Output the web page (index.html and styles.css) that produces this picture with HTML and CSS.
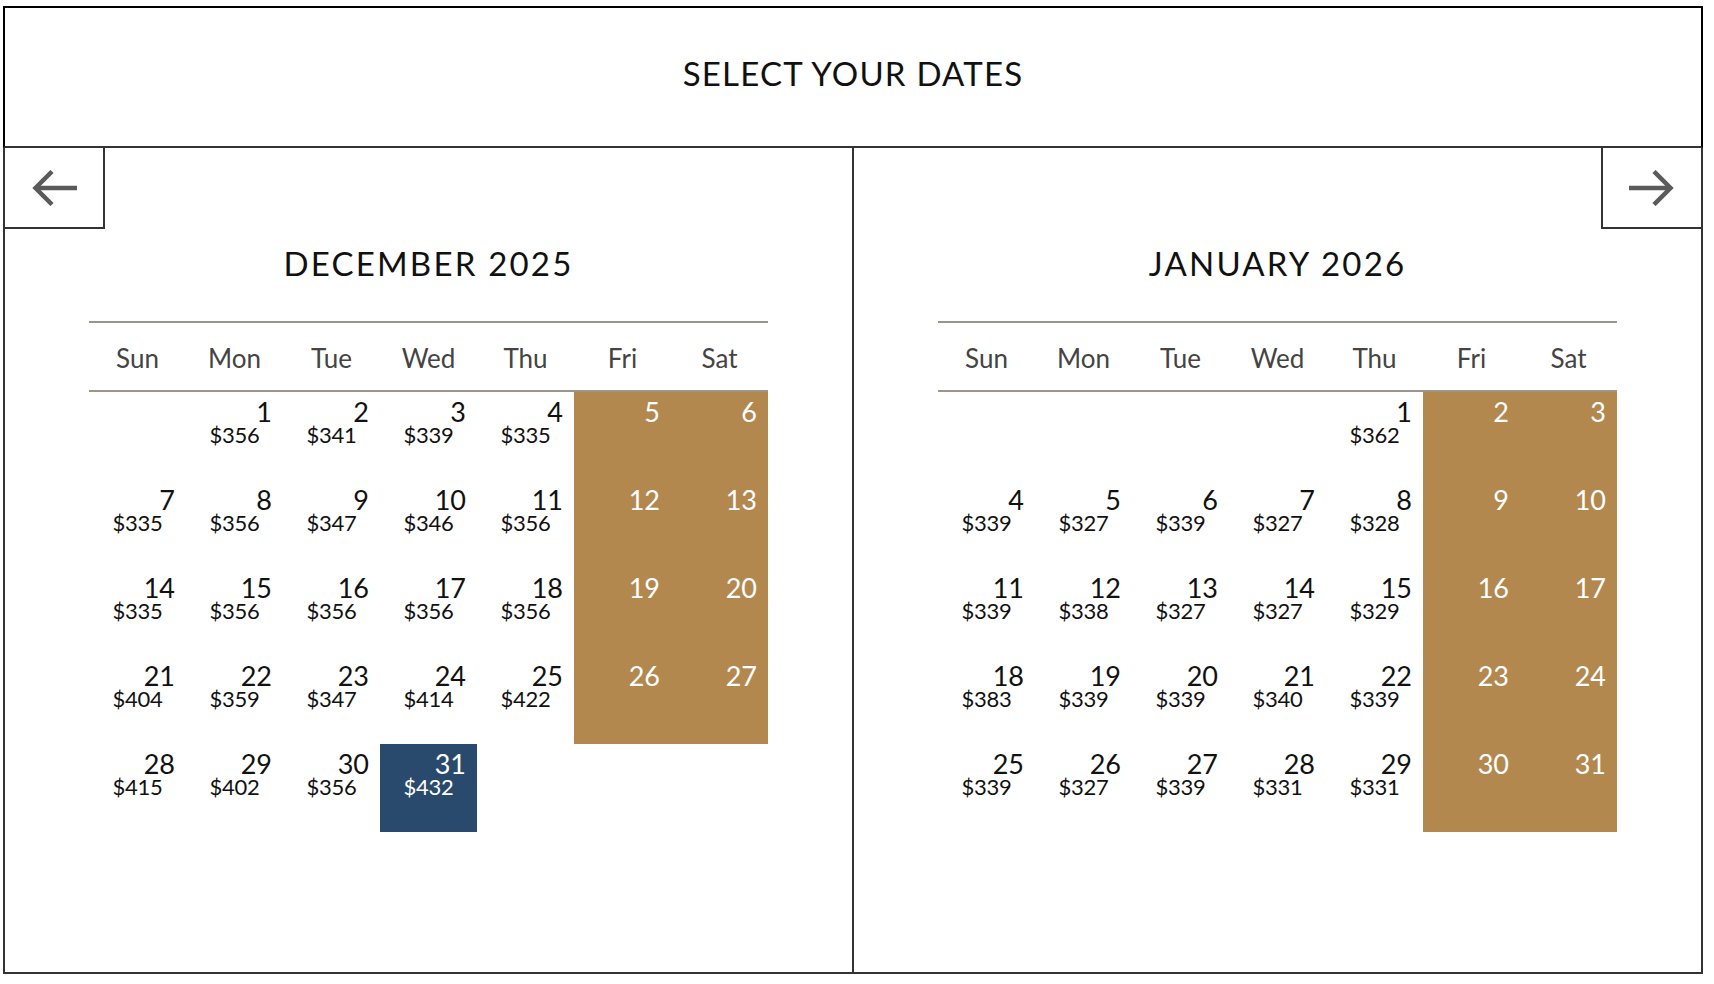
FILE: index.html
```html
<!DOCTYPE html>
<html lang="en">
<head>
<meta charset="utf-8">
<title>Select your dates</title>
<link rel="stylesheet" href="styles.css">
</head>
<body>
<div class="frame">
  <header class="header">
    <h1 class="header-title">SELECT YOUR DATES</h1>
  </header>
  <div class="months">
    <section class="panel panel-left">
      <button class="nav nav-prev" aria-label="Previous month">
        <svg width="46" height="36" viewBox="0 0 46 36"><path d="M46 18H5" /><polyline points="21,1.5 4.5,18 21,34.5" /></svg>
      </button>
      <h2 class="month-title">DECEMBER 2025</h2>
      <div class="cal">
        <div class="weekdays">
          <span>Sun</span><span>Mon</span><span>Tue</span><span>Wed</span><span>Thu</span><span>Fri</span><span>Sat</span>
        </div>
        <div class="days">
          <div class="cell"></div>
          <div class="cell"><div class="num">1</div><div class="price">$356</div></div>
          <div class="cell"><div class="num">2</div><div class="price">$341</div></div>
          <div class="cell"><div class="num">3</div><div class="price">$339</div></div>
          <div class="cell"><div class="num">4</div><div class="price">$335</div></div>
          <div class="cell wknd"><div class="num">5</div></div>
          <div class="cell wknd"><div class="num">6</div></div>

          <div class="cell"><div class="num">7</div><div class="price">$335</div></div>
          <div class="cell"><div class="num">8</div><div class="price">$356</div></div>
          <div class="cell"><div class="num">9</div><div class="price">$347</div></div>
          <div class="cell"><div class="num">10</div><div class="price">$346</div></div>
          <div class="cell"><div class="num">11</div><div class="price">$356</div></div>
          <div class="cell wknd"><div class="num">12</div></div>
          <div class="cell wknd"><div class="num">13</div></div>

          <div class="cell"><div class="num">14</div><div class="price">$335</div></div>
          <div class="cell"><div class="num">15</div><div class="price">$356</div></div>
          <div class="cell"><div class="num">16</div><div class="price">$356</div></div>
          <div class="cell"><div class="num">17</div><div class="price">$356</div></div>
          <div class="cell"><div class="num">18</div><div class="price">$356</div></div>
          <div class="cell wknd"><div class="num">19</div></div>
          <div class="cell wknd"><div class="num">20</div></div>

          <div class="cell"><div class="num">21</div><div class="price">$404</div></div>
          <div class="cell"><div class="num">22</div><div class="price">$359</div></div>
          <div class="cell"><div class="num">23</div><div class="price">$347</div></div>
          <div class="cell"><div class="num">24</div><div class="price">$414</div></div>
          <div class="cell"><div class="num">25</div><div class="price">$422</div></div>
          <div class="cell wknd"><div class="num">26</div></div>
          <div class="cell wknd"><div class="num">27</div></div>

          <div class="cell"><div class="num">28</div><div class="price">$415</div></div>
          <div class="cell"><div class="num">29</div><div class="price">$402</div></div>
          <div class="cell"><div class="num">30</div><div class="price">$356</div></div>
          <div class="cell selected"><div class="num">31</div><div class="price">$432</div></div>
          <div class="cell"></div>
          <div class="cell"></div>
          <div class="cell"></div>
        </div>
      </div>
    </section>
    <section class="panel panel-right">
      <button class="nav nav-next" aria-label="Next month">
        <svg width="46" height="36" viewBox="0 0 46 36"><path d="M0 18H41" /><polyline points="25,1.5 41.5,18 25,34.5" /></svg>
      </button>
      <h2 class="month-title">JANUARY 2026</h2>
      <div class="cal">
        <div class="weekdays">
          <span>Sun</span><span>Mon</span><span>Tue</span><span>Wed</span><span>Thu</span><span>Fri</span><span>Sat</span>
        </div>
        <div class="days">
          <div class="cell"></div>
          <div class="cell"></div>
          <div class="cell"></div>
          <div class="cell"></div>
          <div class="cell"><div class="num">1</div><div class="price">$362</div></div>
          <div class="cell wknd"><div class="num">2</div></div>
          <div class="cell wknd"><div class="num">3</div></div>

          <div class="cell"><div class="num">4</div><div class="price">$339</div></div>
          <div class="cell"><div class="num">5</div><div class="price">$327</div></div>
          <div class="cell"><div class="num">6</div><div class="price">$339</div></div>
          <div class="cell"><div class="num">7</div><div class="price">$327</div></div>
          <div class="cell"><div class="num">8</div><div class="price">$328</div></div>
          <div class="cell wknd"><div class="num">9</div></div>
          <div class="cell wknd"><div class="num">10</div></div>

          <div class="cell"><div class="num">11</div><div class="price">$339</div></div>
          <div class="cell"><div class="num">12</div><div class="price">$338</div></div>
          <div class="cell"><div class="num">13</div><div class="price">$327</div></div>
          <div class="cell"><div class="num">14</div><div class="price">$327</div></div>
          <div class="cell"><div class="num">15</div><div class="price">$329</div></div>
          <div class="cell wknd"><div class="num">16</div></div>
          <div class="cell wknd"><div class="num">17</div></div>

          <div class="cell"><div class="num">18</div><div class="price">$383</div></div>
          <div class="cell"><div class="num">19</div><div class="price">$339</div></div>
          <div class="cell"><div class="num">20</div><div class="price">$339</div></div>
          <div class="cell"><div class="num">21</div><div class="price">$340</div></div>
          <div class="cell"><div class="num">22</div><div class="price">$339</div></div>
          <div class="cell wknd"><div class="num">23</div></div>
          <div class="cell wknd"><div class="num">24</div></div>

          <div class="cell"><div class="num">25</div><div class="price">$339</div></div>
          <div class="cell"><div class="num">26</div><div class="price">$327</div></div>
          <div class="cell"><div class="num">27</div><div class="price">$339</div></div>
          <div class="cell"><div class="num">28</div><div class="price">$331</div></div>
          <div class="cell"><div class="num">29</div><div class="price">$331</div></div>
          <div class="cell wknd"><div class="num">30</div></div>
          <div class="cell wknd"><div class="num">31</div></div>
        </div>
      </div>
    </section>
  </div>
</div>
</body>
</html>
```
FILE: styles.css
```css
* { box-sizing: border-box; }

html, body {
  margin: 0;
  background: #fff;
}

body {
  padding: 6px 0 0 3px;
  font-family: "Lato", "Open Sans", sans-serif;
  color: #111;
}

.frame {
  width: 1700px;
}

.header {
  height: 142px;
  border: 2px solid #000;
  border-bottom-color: #333;
  display: flex;
  align-items: center;
  justify-content: center;
  padding-bottom: 8px;
}

.header-title {
  margin: 0;
  font-size: 33px;
  font-weight: 400;
  letter-spacing: 1.2px;
  line-height: 40px;
  color: #111;
}

.months {
  display: flex;
  height: 826px;
  border: 2px solid #333;
  border-top: none;
}

.panel {
  flex: 1 1 0;
  position: relative;
  display: flex;
  flex-direction: column;
  align-items: center;
  padding-top: 95px;
}

.panel-left {
  border-right: 2px solid #333;
}

.nav {
  position: absolute;
  top: 0;
  width: 100px;
  height: 81px;
  padding: 0;
  margin: 0;
  background: #fff;
  border: 0 solid #333;
  border-bottom-width: 2px;
  display: flex;
  align-items: center;
  justify-content: center;
  cursor: pointer;
}

.nav svg path,
.nav svg polyline {
  fill: none;
  stroke: #5a5a5a;
  stroke-width: 4.5;
}

.nav-prev {
  left: 0;
  border-right-width: 2px;
}

.nav-next {
  right: 0;
  border-left-width: 2px;
}

.month-title {
  margin: 0 0 38px;
  font-size: 33px;
  font-weight: 400;
  letter-spacing: 2.2px;
  line-height: 40px;
  color: #111;
}

.cal {
  width: 679px;
  border-top: 2px solid #9b968a;
}

.weekdays {
  display: grid;
  grid-template-columns: repeat(7, 97px);
  height: 69px;
  padding-top: 3px;
  align-items: center;
  border-bottom: 2px solid #9b968a;
}

.weekdays span {
  text-align: center;
  font-size: 26px;
  color: #444;
}

.days {
  display: grid;
  grid-template-columns: repeat(7, 97px);
  grid-auto-rows: 88px;
}

.cell {
  padding: 6px 11px 0;
}

.num {
  text-align: right;
  font-size: 27px;
  line-height: 27px;
  color: #111;
}

.price {
  text-align: center;
  font-size: 22px;
  line-height: 20px;
  color: #111;
  letter-spacing: -0.3px;
}

.wknd {
  background: #b3884f;
}

.wknd .num {
  color: #fff;
  padding-right: 0;
}

.selected {
  background: #2a4a6d;
}

.selected .num,
.selected .price {
  color: #fff;
}
```
